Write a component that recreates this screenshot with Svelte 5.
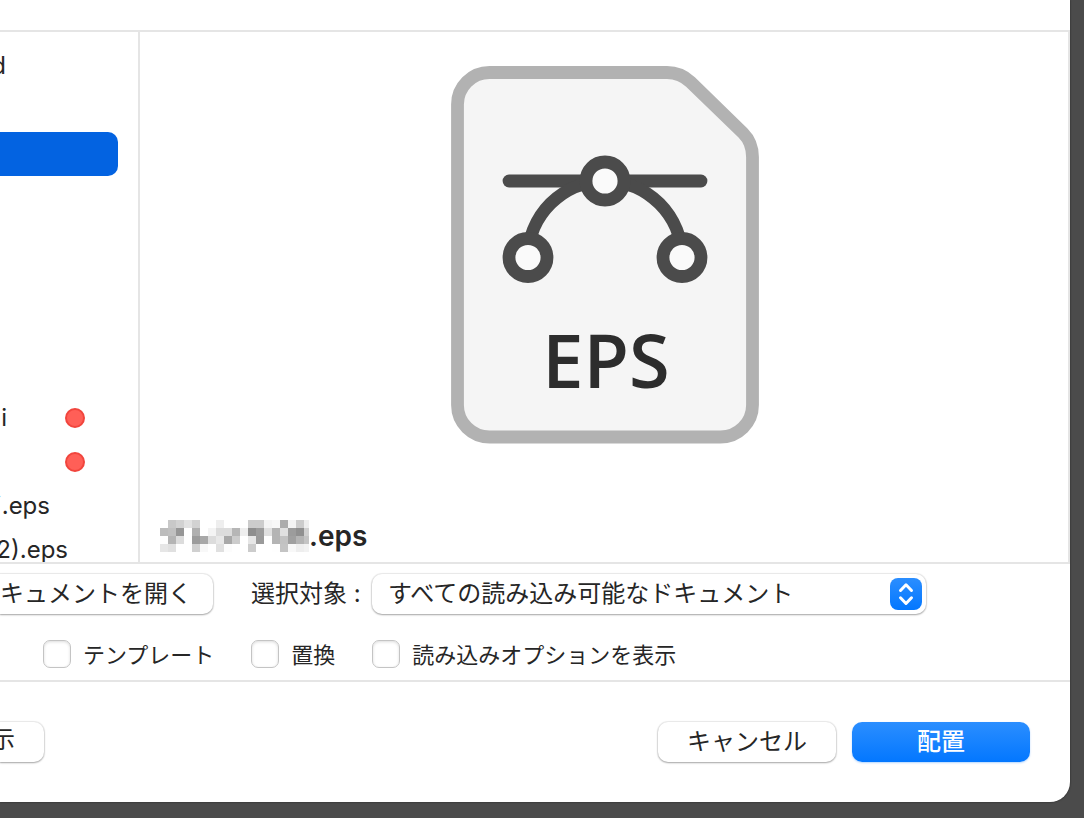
<script lang="ts">
    interface FileRow {
        name?: string;
        shown?: number;
        selected?: boolean;
        tagged?: boolean;
    }

    const files: FileRow[] = [
        { name: "d", shown: 6 },
        {},
        { selected: true },
        {},
        {},
        {},
        {},
        {},
        { name: "i", shown: 7, tagged: true },
        { tagged: true },
        { name: "ず.eps", shown: 50 },
        { name: "2).eps", shown: 68 },
    ];

    // grey levels of the censored part of the file name
    const mosaic = [
        "ff c8 d2 e2 d2 ff ff ee ff ff ff cc cc f4 f8 ac f4 cc ee",
        "bc c0 96 ff b0 ff f4 dc dc b6 ee 8e 9c e0 b4 e0 9c 90 d0",
        "fe b4 dc ff 9c a8 dc e8 a8 cc ff e6 9a ff b4 c2 a0 b4 c4",
        "e6 e0 ff ff d0 f8 ff e0 fc ff ff cc ff ff fe c4 f8 ee f2",
    ].map((row) => row.split(" "));

    let options = $state([
        { id: "template", label: "テンプレート", checked: false },
        { id: "replace", label: "置換", checked: false },
        { id: "import-options", label: "読み込みオプションを表示", checked: false },
    ]);
</script>

<main class="dialog">
    <header class="toolbar"></header>

    <div class="browser">
        <ul class="files">
            {#each files as file}
                <li class="file" class:selected={file.selected}>
                    {#if file.name}
                        <span class="file-name" style="width: {file.shown}px">{file.name}</span>
                    {/if}
                    {#if file.tagged}
                        <span class="tag"></span>
                    {/if}
                </li>
            {/each}
        </ul>

        <section class="preview">
            <svg class="document" width="308" height="378" viewBox="0 0 308 378" aria-hidden="true">
                <path
                    d="M38.5 6.5H216Q229.5 6.5 239.5 16L292 67Q301.5 76.5 301.5 91V339A32 32 0 0 1 269.5 371H38.5A32 32 0 0 1 6.5 339V38.5A32 32 0 0 1 38.5 6.5Z"
                    fill="#f5f5f5"
                    stroke="#b2b2b2"
                    stroke-width="12.8"
                />
                <g fill="none" stroke="#4b4b4b" stroke-width="12.8" stroke-linecap="round">
                    <path d="M58 115H250" />
                    <path d="M77 192A77 77 0 0 1 231 192" />
                    <circle cx="154" cy="115" r="19" fill="#fafafa" />
                    <circle cx="77" cy="191.5" r="19" fill="#fafafa" />
                    <circle cx="231" cy="191.5" r="19" fill="#fafafa" />
                </g>
                <text x="155" y="322" text-anchor="middle">EPS</text>
            </svg>
            <h2 class="preview-name">
                <svg width="149" height="32" viewBox="0 0 149 32" shape-rendering="crispEdges" aria-hidden="true">
                    {#each mosaic as row, y}
                        {#each row as level, x}
                            <rect x={x * 8} y={y * 8} width="8" height="8" fill="#{level}{level}{level}" />
                        {/each}
                    {/each}
                </svg>
                <span>.eps</span>
            </h2>
        </section>
    </div>

    <section class="controls">
        <div class="control-row">
            <button type="button" class="btn btn-open">キュメントを開く</button>
            <label class="select-label" for="kind">選択対象 :</label>
            <div class="select">
                <select id="kind">
                    <option>すべての読み込み可能なドキュメント</option>
                </select>
                <svg class="select-icon" width="32" height="32" viewBox="0 0 32 32" aria-hidden="true">
                    <defs>
                        <linearGradient id="accent" x1="0" y1="0" x2="0" y2="1">
                            <stop offset="0" stop-color="#2b8eff" />
                            <stop offset="1" stop-color="#0377ff" />
                        </linearGradient>
                    </defs>
                    <rect width="32" height="32" rx="8" fill="url(#accent)" />
                    <path
                        d="M10.5 12.5L16 6.8L21.5 12.5M10.5 19.8L16 25.5L21.5 19.8"
                        fill="none"
                        stroke="#ffffff"
                        stroke-width="3"
                        stroke-linecap="round"
                        stroke-linejoin="round"
                    />
                </svg>
            </div>
        </div>
        <div class="option-row">
            {#each options as option (option.id)}
                <label class="option" for={option.id}>
                    <input type="checkbox" id={option.id} bind:checked={option.checked} />
                    <span class="option-text">{option.label}</span>
                </label>
            {/each}
        </div>
    </section>

    <footer class="actions">
        <button type="button" class="btn btn-show">示</button>
        <button type="button" class="btn btn-action">キャンセル</button>
        <button type="button" class="btn btn-action btn-primary">配置</button>
    </footer>
</main>

<style>
    :global(body) {
        background: #4b4b4b;
    }

    .dialog {
        margin: 0 14px 16px 0;
        background: #ffffff;
        border-radius: 0 0 20px 0;
        box-shadow: 0 0 2px rgba(0, 0, 0, 0.6);
        overflow: hidden;
        color: #262626;
        font-family: "Inter", "Noto Sans CJK JP", sans-serif;
        font-size: 24px;
        line-height: 32px;
    }

    .toolbar {
        height: 30px;
    }

    .browser {
        display: grid;
        grid-template-columns: 138px 1fr;
        border-top: 2px solid #e5e5e5;
        border-bottom: 2px solid #e5e5e5;
    }

    .files {
        height: 0;
        min-height: 100%;
        box-sizing: border-box;
        margin: 0;
        padding: 12px 0 0;
        list-style: none;
        overflow: hidden;
    }

    .file {
        display: flex;
        align-items: center;
        height: 44px;
        margin-right: 20px;
        border-radius: 0 10px 10px 0;
    }

    .file.selected {
        background: #0363e1;
    }

    .file-name {
        display: flex;
        justify-content: flex-end;
        overflow: hidden;
        white-space: nowrap;
    }

    .tag {
        width: 20px;
        height: 20px;
        margin-left: auto;
        margin-right: 33px;
        box-sizing: border-box;
        border: 2px solid #f1453d;
        border-radius: 50%;
        background: #ff5f57;
    }

    .preview {
        display: flex;
        flex-direction: column;
        align-items: center;
        gap: 76px;
        padding: 34px 18px 10px 20px;
        border-left: 2px solid #e5e5e5;
        border-right: 2px solid #e5e5e5;
    }

    .document text {
        fill: #2d2d2d;
        font-family: "Open Sans", sans-serif;
        font-size: 74px;
        font-weight: 600;
    }

    .preview-name {
        display: flex;
        align-self: stretch;
        margin: 0;
        font-size: 28px;
        font-weight: 600;
    }

    .controls {
        display: flex;
        flex-direction: column;
        gap: 26px;
        padding: 10px 0 12px;
        border-bottom: 2px solid #e5e5e5;
    }

    .control-row {
        display: flex;
        align-items: center;
    }

    .btn {
        height: 40px;
        box-sizing: border-box;
        padding: 0;
        border: 0;
        border-radius: 10px;
        background: #ffffff;
        box-shadow:
            0 0 1px 1px rgba(0, 0, 0, 0.08),
            0 1px 2px rgba(0, 0, 0, 0.3);
        color: inherit;
        font: inherit;
        line-height: 36px;
        white-space: nowrap;
    }

    .btn-open {
        display: flex;
        justify-content: flex-end;
        width: 213px;
        padding-right: 21px;
        border-radius: 0 10px 10px 0;
        line-height: 40px;
    }

    .select-label {
        width: 121px;
        margin-left: 38px;
        white-space: nowrap;
    }

    .select {
        position: relative;
        flex: 0 1 554px;
    }

    select {
        display: block;
        width: 100%;
        height: 40px;
        padding: 0 48px 0 16px;
        appearance: none;
        border: 0;
        border-radius: 10px;
        background: #ffffff;
        box-shadow:
            0 0 1px 1px rgba(0, 0, 0, 0.08),
            0 1px 2px rgba(0, 0, 0, 0.3);
        color: inherit;
        font: inherit;
    }

    .select-icon {
        position: absolute;
        top: 4px;
        right: 4px;
        pointer-events: none;
    }

    .option-row {
        display: flex;
        gap: 37px;
        padding-left: 43px;
    }

    .option {
        display: flex;
        align-items: center;
        gap: 12px;
        height: 28px;
        font-size: 22px;
        white-space: nowrap;
    }

    .option-text {
        padding-top: 2px;
    }

    .option input {
        width: 28px;
        height: 28px;
        margin: 0;
        appearance: none;
        border: 1px solid #c4c4c4;
        border-radius: 7px;
        background: #ffffff;
        box-shadow: inset 0 1px 3px rgba(0, 0, 0, 0.14);
    }

    .option input:checked {
        background: #0a7aff;
    }

    .actions {
        display: flex;
        gap: 16px;
        padding: 40px 40px 40px 0;
    }

    .btn-show {
        display: flex;
        justify-content: flex-end;
        width: 44px;
        margin-right: auto;
        padding-right: 29px;
        border-radius: 0 10px 10px 0;
    }

    .btn-action {
        width: 178px;
    }

    .btn-primary {
        background: linear-gradient(#2b8eff, #0377ff);
        box-shadow: 0 1px 2px rgba(3, 119, 255, 0.3);
        color: #ffffff;
        font-weight: 500;
    }
</style>
